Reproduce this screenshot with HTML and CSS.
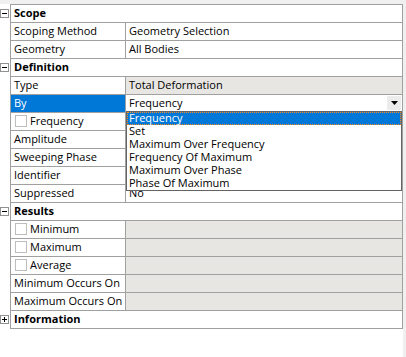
FILE: index.html
```html
<!DOCTYPE html>
<html>
<head>
<meta charset="utf-8">
<link rel="stylesheet" href="styles.css">
</head>
<body>
<div class="top"></div>
<div class="frame">
  <div class="main">
    <div class="gridtop"></div>

    <div class="row">
      <div class="gutter"><svg class="exp" width="9" height="9" viewBox="0 0 9 9"><rect x="0.5" y="0.5" width="8" height="8" fill="#fff" stroke="#919191"/><path d="M2 4.5h5" stroke="#000"/></svg></div>
      <div class="cells"><div class="head">Scope</div></div>
    </div>
    <div class="row">
      <div class="gutter"></div>
      <div class="cells"><div class="label">Scoping Method</div><div class="value">Geometry Selection</div></div>
    </div>
    <div class="row">
      <div class="gutter"></div>
      <div class="cells"><div class="label">Geometry</div><div class="value">All Bodies</div></div>
    </div>

    <div class="row">
      <div class="gutter"><svg class="exp" width="9" height="9" viewBox="0 0 9 9"><rect x="0.5" y="0.5" width="8" height="8" fill="#fff" stroke="#919191"/><path d="M2 4.5h5" stroke="#000"/></svg></div>
      <div class="cells"><div class="head">Definition</div></div>
    </div>
    <div class="row">
      <div class="gutter"></div>
      <div class="cells"><div class="label">Type</div><div class="value ro">Total Deformation</div></div>
    </div>
    <div class="row">
      <div class="gutter"></div>
      <div class="cells">
        <div class="label sel">By</div>
        <div class="value combo">
          <span class="combo-text">Frequency</span>
          <span class="combo-btn"><svg width="7" height="4" viewBox="0 0 7 4"><path d="M0 0h7L3.5 4z" fill="#000"/></svg></span>
          <div class="list">
            <div class="item active">Frequency</div>
            <div class="item">Set</div>
            <div class="item">Maximum Over Frequency</div>
            <div class="item">Frequency Of Maximum</div>
            <div class="item">Maximum Over Phase</div>
            <div class="item">Phase Of Maximum</div>
          </div>
        </div>
      </div>
    </div>
    <div class="row">
      <div class="gutter"></div>
      <div class="cells"><div class="label"><span class="check"></span>Frequency</div><div class="value"></div></div>
    </div>
    <div class="row">
      <div class="gutter"></div>
      <div class="cells"><div class="label">Amplitude</div><div class="value"></div></div>
    </div>
    <div class="row">
      <div class="gutter"></div>
      <div class="cells"><div class="label">Sweeping Phase</div><div class="value"></div></div>
    </div>
    <div class="row">
      <div class="gutter"></div>
      <div class="cells"><div class="label">Identifier</div><div class="value"></div></div>
    </div>
    <div class="row">
      <div class="gutter"></div>
      <div class="cells"><div class="label">Suppressed</div><div class="value">No</div></div>
    </div>

    <div class="row">
      <div class="gutter"><svg class="exp" width="9" height="9" viewBox="0 0 9 9"><rect x="0.5" y="0.5" width="8" height="8" fill="#fff" stroke="#919191"/><path d="M2 4.5h5" stroke="#000"/></svg></div>
      <div class="cells"><div class="head">Results</div></div>
    </div>
    <div class="row">
      <div class="gutter"></div>
      <div class="cells"><div class="label"><span class="check"></span>Minimum</div><div class="value ro"></div></div>
    </div>
    <div class="row">
      <div class="gutter"></div>
      <div class="cells"><div class="label"><span class="check"></span>Maximum</div><div class="value ro"></div></div>
    </div>
    <div class="row">
      <div class="gutter"></div>
      <div class="cells"><div class="label"><span class="check"></span>Average</div><div class="value ro"></div></div>
    </div>
    <div class="row">
      <div class="gutter"></div>
      <div class="cells"><div class="label">Minimum Occurs On</div><div class="value ro"></div></div>
    </div>
    <div class="row">
      <div class="gutter"></div>
      <div class="cells"><div class="label">Maximum Occurs On</div><div class="value ro"></div></div>
    </div>

    <div class="row">
      <div class="gutter"><svg class="exp" width="9" height="9" viewBox="0 0 9 9"><rect x="0.5" y="0.5" width="8" height="8" fill="#fff" stroke="#919191"/><path d="M2 4.5h5M4.5 2v5" stroke="#000"/></svg></div>
      <div class="cells"><div class="head">Information</div></div>
    </div>
  </div>
  <div class="strip"></div>
</div>
</body>
</html>
```
FILE: styles.css
```css
html, body {
  margin: 0;
  padding: 0;
  background: #fff;
}
body {
  width: 406px;
  height: 357px;
  overflow: hidden;
  font-family: "Open Sans", "Noto Sans", sans-serif;
  font-size: 11px;
  color: #000;
}
.top {
  height: 4px;
  background: #f0f0f0;
}
.frame {
  display: flex;
  height: 353px;
}
.main {
  width: 403px;
  background: #fff;
}
.strip {
  flex: 1;
  background: #f0f0f0;
}
.gridtop {
  margin-left: 10px;
  width: 393px;
  height: 1px;
  background: #a0a0a0;
}
.row {
  display: flex;
  height: 18px;
}
.gutter {
  width: 10px;
  height: 17px;
  display: flex;
  align-items: center;
}
.exp {
  display: block;
}
.cells {
  width: 393px;
  height: 18px;
  box-sizing: border-box;
  display: flex;
  border-left: 1px solid #a0a0a0;
  border-right: 1px solid #a0a0a0;
  border-bottom: 1px solid #a0a0a0;
}
.head {
  flex: 1;
  height: 17px;
  box-sizing: border-box;
  padding: 0 0 2px 3px;
  line-height: 15px;
  font-weight: 700;
}
.label {
  width: 115px;
  height: 17px;
  box-sizing: border-box;
  border-right: 1px solid #a0a0a0;
  padding: 0 0 2px 3px;
  line-height: 15px;
  white-space: nowrap;
  overflow: hidden;
  display: flex;
  align-items: center;
}
.label.sel {
  background: #0078d7;
  color: #fff;
}
.check {
  width: 12px;
  height: 12px;
  box-sizing: border-box;
  border: 1px solid #bdbdbd;
  background: #fff;
  margin-left: 1px;
  margin-right: 3px;
  flex: none;
}
.value {
  flex: 1;
  height: 17px;
  box-sizing: border-box;
  padding: 0 0 2px 3px;
  line-height: 15px;
  white-space: nowrap;
}
.value.ro {
  background: #e7e6e3;
}
.combo {
  position: relative;
  display: flex;
  align-items: flex-start;
}
.combo-text {
  flex: 1;
}
.combo-btn {
  width: 14px;
  height: 14px;
  margin-top: 1px;
  margin-right: 1px;
  background: #ececec;
  display: flex;
  align-items: center;
  justify-content: center;
}
.combo-btn svg {
  display: block;
}
.list {
  position: absolute;
  left: 0;
  top: 16px;
  width: 276px;
  box-sizing: border-box;
  border: 1px solid #646464;
  background: #fff;
}
.item {
  height: 13px;
  line-height: 12px;
  padding-left: 2px;
  box-sizing: border-box;
}
.item.active {
  background: #0078d7;
  color: #fff;
  border: 1px dotted #ff8c1a;
  padding-left: 1px;
  line-height: 10px;
}
```
